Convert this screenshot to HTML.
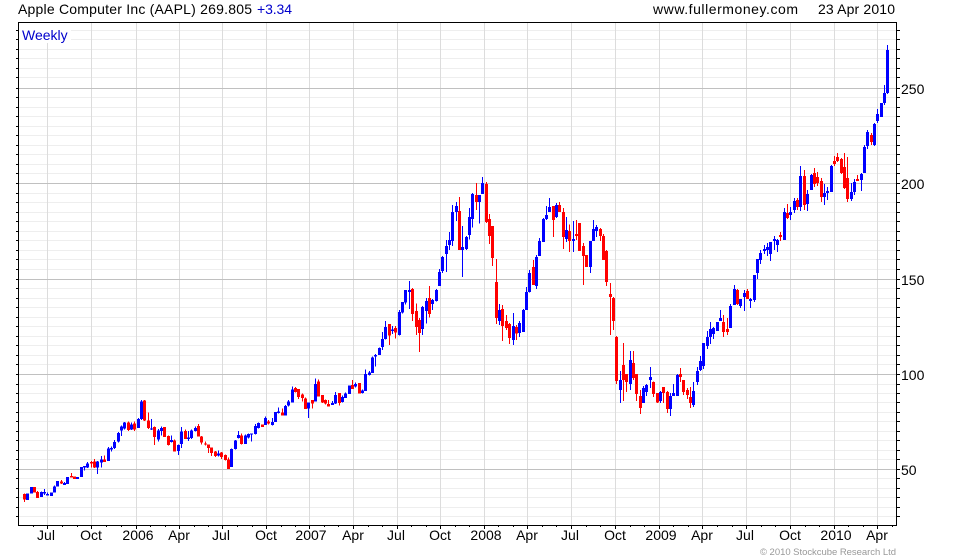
<!DOCTYPE html>
<html><head><meta charset="utf-8"><title>AAPL Weekly</title>
<style>
html,body{margin:0;padding:0;background:#fff;width:980px;height:560px;overflow:hidden}
svg{display:block}
text{font-family:"Liberation Sans",Arial,sans-serif;font-size:14px;fill:#000;shape-rendering:auto}
.b{fill:none;stroke:#0000ff}.r{fill:none;stroke:#ff0000}
.w{stroke-width:3}.o{stroke-width:9.4}
</style></head><body>
<svg width="980" height="560" viewBox="0 0 980 560" xmlns="http://www.w3.org/2000/svg" shape-rendering="crispEdges">
<rect width="980" height="560" fill="#fff"/>
<!-- minor horizontal grid -->
<path fill="none" stroke="#eeeeee" d="M19 30.5H896M19 39.5H896M19 49.5H896M19 58.5H896M19 68.5H896M19 77.5H896M19 97.5H896M19 107.5H896M19 116.5H896M19 126.5H896M19 135.5H896M19 145.5H896M19 154.5H896M19 164.5H896M19 173.5H896M19 193.5H896M19 202.5H896M19 212.5H896M19 221.5H896M19 231.5H896M19 240.5H896M19 250.5H896M19 259.5H896M19 269.5H896M19 288.5H896M19 298.5H896M19 307.5H896M19 317.5H896M19 326.5H896M19 336.5H896M19 345.5H896M19 355.5H896M19 364.5H896M19 384.5H896M19 393.5H896M19 402.5H896M19 412.5H896M19 421.5H896M19 431.5H896M19 440.5H896M19 450.5H896M19 459.5H896M19 478.5H896M19 488.5H896M19 497.5H896M19 507.5H896M19 516.5H896"/>
<!-- vertical grid -->
<path fill="none" stroke="#dcdcdc" d="M47.5 23V525M91.5 23V525M136.5 23V525M179.5 23V525M222.5 23V525M266.5 23V525M309.5 23V525M353.5 23V525M397.5 23V525M440.5 23V525M484.5 23V525M527.5 23V525M571.5 23V525M615.5 23V525M659.5 23V525M702.5 23V525M746.5 23V525M790.5 23V525M834.5 23V525M877.5 23V525"/>
<!-- major horizontal grid -->
<path fill="none" stroke="#c0c0c0" d="M19 88.5H896M19 183.5H896M19 279.5H896M19 374.5H896M19 469.5H896"/>
<rect x="19" y="23" width="52" height="20" fill="#fff"/>
<!-- ticks -->
<path fill="none" stroke="#000" d="M16 30.5H18M16 39.5H18M16 49.5H18M16 58.5H18M16 68.5H18M16 77.5H18M16 88.5H18M16 97.5H18M16 107.5H18M16 116.5H18M16 126.5H18M16 135.5H18M16 145.5H18M16 154.5H18M16 164.5H18M16 173.5H18M16 183.5H18M16 193.5H18M16 202.5H18M16 212.5H18M16 221.5H18M16 231.5H18M16 240.5H18M16 250.5H18M16 259.5H18M16 269.5H18M16 279.5H18M16 288.5H18M16 298.5H18M16 307.5H18M16 317.5H18M16 326.5H18M16 336.5H18M16 345.5H18M16 355.5H18M16 364.5H18M16 374.5H18M16 384.5H18M16 393.5H18M16 402.5H18M16 412.5H18M16 421.5H18M16 431.5H18M16 440.5H18M16 450.5H18M16 459.5H18M16 469.5H18M16 478.5H18M16 488.5H18M16 497.5H18M16 507.5H18M16 516.5H18"/>
<path fill="none" stroke="#000" d="M897 30.5H900M897 39.5H900M897 49.5H900M897 58.5H900M897 68.5H900M897 77.5H900M897 88.5H900M897 97.5H900M897 107.5H900M897 116.5H900M897 126.5H900M897 135.5H900M897 145.5H900M897 154.5H900M897 164.5H900M897 173.5H900M897 183.5H900M897 193.5H900M897 202.5H900M897 212.5H900M897 221.5H900M897 231.5H900M897 240.5H900M897 250.5H900M897 259.5H900M897 269.5H900M897 279.5H900M897 288.5H900M897 298.5H900M897 307.5H900M897 317.5H900M897 326.5H900M897 336.5H900M897 345.5H900M897 355.5H900M897 364.5H900M897 374.5H900M897 384.5H900M897 393.5H900M897 402.5H900M897 412.5H900M897 421.5H900M897 431.5H900M897 440.5H900M897 450.5H900M897 459.5H900M897 469.5H900M897 478.5H900M897 488.5H900M897 497.5H900M897 507.5H900M897 516.5H900"/>
<path fill="none" stroke="#000" d="M33.5 526V527M47.5 526V529M62.5 526V527M77.5 526V527M91.5 526V529M106.5 526V527M121.5 526V527M136.5 526V529M150.5 526V527M165.5 526V527M179.5 526V529M194.5 526V527M208.5 526V527M222.5 526V529M237.5 526V527M252.5 526V527M266.5 526V529M281.5 526V527M295.5 526V527M309.5 526V529M324.5 526V527M338.5 526V527M353.5 526V529M368.5 526V527M382.5 526V527M397.5 526V529M411.5 526V527M426.5 526V527M440.5 526V529M455.5 526V527M469.5 526V527M484.5 526V529M498.5 526V527M513.5 526V527M527.5 526V529M542.5 526V527M556.5 526V527M571.5 526V529M586.5 526V527M600.5 526V527M615.5 526V529M630.5 526V527M644.5 526V527M659.5 526V529M673.5 526V527M688.5 526V527M702.5 526V529M717.5 526V527M732.5 526V527M746.5 526V529M761.5 526V527M775.5 526V527M790.5 526V529M805.5 526V527M819.5 526V527M834.5 526V529M848.5 526V527M863.5 526V527M877.5 526V529M892.5 526V527"/>
<!-- frame -->
<path fill="none" stroke="#000" d="M18.5 22.5H896.5V525.5H18.5Z"/>

<!-- candles A -->
<g transform="translate(.17,380) scale(.33333)">
<path class="b w" d="M82 340V360M94 321V341M124 335V351M133 327V345M142 338V347M154 337V348M163 316V338M172 303V320M193 306V315M202 291V312M232 291V297M244 261V291M253 258V272M262 246V264M292 243V282M304 228V262M325 201V243M334 199V215M343 180V207M355 156V188M364 136V168M373 126V148M394 127V150M415 114V144M424 60V120M454 117V150M475 147V184M484 140V167M514 166V187M535 193V225M544 141V204M565 153V183M574 149V177M586 140V155M655 211V229M694 206V261M706 180V209M715 153V175M736 163V192M745 160V176M754 160V184M766 132V163M775 127V146M796 109V135M817 114V137M826 96V126M835 83V100M856 75V106M865 60V79"/>
<path class="b o" d="M82 340V360M94 321V341M124 336V351M133 336V341M142 342V347M154 337V348M163 320V338M172 303V320M193 309V315M202 291V312M232 291V297M244 261V291M253 258V263M262 250V263M292 245V263M304 238V248M325 205V243M334 204V209M343 186V204M355 159V185M364 139V152M373 128V146M394 134V148M415 117V144M424 64V117M454 145V149M475 151V178M484 144V153M514 180V186M535 195V213M544 155V192M565 172V177M574 152V174M586 144V153M655 220V226M694 207V261M706 181V207M715 165V174M736 166V192M745 162V172M754 160V164M766 138V162M775 129V144M796 114V135M817 126V135M826 96V126M835 95V99M856 78V106M865 64V77"/>
<path class="r w" d="M73 340V366M103 321V338M112 333V354M184 300V312M214 279V293M223 290V297M274 243V262M283 237V264M313 226V246M385 124V153M403 124V153M433 60V123M445 98V147M463 140V195M493 141V171M505 167V197M523 178V215M556 148V177M595 132V170M604 168V193M616 184V196M625 193V219M634 202V228M646 213V231M664 216V237M676 223V241M685 233V267M724 160V194M787 133V141M805 120V134M847 86V107"/>
<path class="r o" d="M73 342V359M103 321V338M112 336V354M184 304V311M214 288V293M223 290V297M274 246V251M283 244V263M313 238V246M385 127V150M403 131V148M433 62V122M445 121V144M463 141V171M493 141V171M505 168V195M523 181V214M556 153V177M595 138V170M604 169V188M616 190V194M625 193V204M634 203V219M646 214V228M664 217V231M676 225V240M685 238V267M724 166V192M787 133V141M805 125V131M847 97V107"/>
</g>
<!-- candles B -->
<g transform="translate(290.17,330) scale(.33333)">
<path class="b w" d="M7 170V218M55 218V264M76 145V215"/>
<path class="b o" d="M7 178V218M55 218V236M76 162V215"/>
<path class="r w" d="M16 171V187M25 177V207M37 190V215M46 203V237M67 210V236M85 148V200M97 195V219M106 208V224M115 210V230"/>
<path class="r o" d="M16 174V186M25 177V201M37 194V204M46 205V237M67 210V221M85 155V200M97 195V218M106 210V220M115 222V230"/>
</g>
<!-- candles C -->
<g transform="translate(330.17,290) scale(.33333)">
<path class="b w" d="M7 333V345M16 306V342M37 317V337M46 307V324M58 287V312M76 278V292M97 298V311M106 238V303M118 243V257M127 200V249M136 192V230M148 173V195M157 126V180"/>
<path class="b o" d="M7 339V345M16 315V341M37 321V336M46 311V324M58 287V312M76 282V289M97 302V309M106 252V303M118 247V255M127 202V249M136 195V200M148 174V195M157 147V171"/>
<path class="r w" d="M28 309V347M67 270V297M88 279V311"/>
<path class="r o" d="M28 309V339M67 285V297M88 279V311"/>
</g>
<!-- candles D -->
<g transform="translate(330.17,170) scale(.33333)">
<path class="b w" d="M166 453V508M187 468V492M208 420V497M217 396V430M226 360V403M238 333V417M277 408V495M289 384V460M307 387V420M319 357V394M328 297V348M337 258V309M349 210V306M358 186V240M367 105V228M379 96V153M397 168V321M409 198V240M418 114V209M427 69V172M448 75V160M457 21V72M508 402V465M550 429V525M568 453V501M580 417V486M589 351V420M598 300V368M619 255V357M628 204V258M640 144V216M649 108V150M658 84V126M679 99V144M709 141V216M730 153V246M781 213V309M790 150V213M799 165V201"/>
<path class="b o" d="M166 471V507M187 478V483M208 426V495M217 396V428M226 360V397M238 360V366M277 411V477M289 393V423M307 390V402M319 360V393M328 306V348M337 261V303M349 228V252M358 210V225M367 126V213M379 108V126M397 231V240M409 201V237M418 141V195M427 72V147M448 75V96M457 39V72M508 420V453M550 468V510M568 459V489M580 420V486M589 366V420M598 309V366M619 261V348M628 213V258M640 147V216M649 135V147M658 111V126M679 105V141M709 180V207M730 207V213M781 213V291M790 177V213M799 171V183"/>
<path class="r w" d="M178 462V525M196 468V505M247 354V453M259 400V495M268 444V546M298 348V442M388 81V240M439 39V120M469 36V159M478 132V222M487 168V288M499 267V462M517 405V513M529 435V480M538 459V522M559 465V510M610 270V345M670 108V201M688 96V126M700 114V237M718 163V246M739 150V210M748 159V243M760 219V345M769 255V291M811 174V213M820 192V270M829 240V348M841 339V495M850 381V480"/>
<path class="r o" d="M178 462V497M196 474V488M247 357V432M259 423V471M268 450V489M298 384V432M388 123V240M439 75V96M469 42V156M478 147V198M487 168V264M499 336V444M517 417V468M529 453V474M538 462V504M559 471V490M610 291V345M670 108V150M688 105V126M700 126V201M718 183V213M739 192V198M748 159V243M760 228V258M769 255V291M811 177V198M820 198V270M829 243V336M841 372V381M850 384V453"/>
</g>
<!-- candles E -->
<g transform="translate(610.17,290) scale(.33333)">
<path class="b w" d="M31 243V339M61 183V300M100 288V338M109 282V318M121 231V294M151 303V339M181 309V378M190 282V318M202 252V318M250 276V351M262 231V285M271 198V243M280 159V237M292 123V177M301 96V162M310 111V147M322 96V123M331 60V93M361 42V114"/>
<path class="b o" d="M31 270V300M61 210V282M100 294V339M109 285V306M121 261V270M151 306V333M181 318V357M190 309V318M202 255V318M250 303V345M262 243V276M271 213V240M280 159V228M292 141V168M301 117V141M310 114V132M322 96V123M331 84V93M361 48V114"/>
<path class="r w" d="M19 138V282M40 159V333M49 252V306M70 183V270M79 252V333M91 300V372M130 274V321M142 309V339M160 291V339M172 303V369M211 234V276M220 270V315M232 294V327M241 291V354M340 75V141M352 84V135"/>
<path class="r o" d="M19 141V273M40 225V270M49 252V276M70 219V264M79 252V312M91 318V354M130 276V312M142 309V337M160 291V309M172 306V357M211 252V261M220 270V306M232 300V315M241 321V339M340 96V126M352 117V126"/>
</g>
<!-- candles F -->
<g transform="translate(700.17,140) scale(.33333)">
<path class="b w" d="M103 435V495M121 477V504M133 450V513M151 474V504M163 405V486M172 357V417M181 330V372M193 315V342M202 309V348M211 306V363M223 288V330M232 297V336M253 204V300M271 201V240M283 174V219M301 78V213M322 150V213M334 102V150M373 132V195M382 141V180M394 75V156M454 129V183M463 117V165M484 99V153"/>
<path class="b o" d="M103 447V495M121 477V498M133 459V471M151 477V483M163 405V480M172 357V399M181 339V360M193 327V333M202 321V330M211 306V342M223 297V303M232 300V315M253 216V300M271 216V225M283 183V210M301 108V201M322 162V192M334 105V150M373 159V171M382 153V159M394 78V156M454 156V177M463 126V156M484 102V120"/>
<path class="r w" d="M112 447V495M142 447V477M241 276V303M262 192V237M292 174V210M313 90V210M343 84V141M352 96V138M364 114V186M403 48V78M412 39V66M424 54V102M433 39V147M442 51V186M472 105V123"/>
<path class="r o" d="M112 450V492M142 453V477M241 285V291M262 219V234M292 180V201M313 108V195M343 99V132M352 111V129M364 123V171M403 63V72M412 51V63M424 57V99M433 81V144M442 114V177M472 117V123"/>
</g>
<!-- candles G -->
<g transform="translate(800.17,40) scale(.33333)">
<path class="b w" d="M193 315V399M202 270V327M223 249V318M232 207V249M244 189V231M253 135V195M262 15V162"/>
<path class="b o" d="M193 321V399M202 276V318M223 252V315M232 222V243M244 189V231M253 159V189M262 30V159"/>
<path class="r w" d="M214 279V315"/>
<path class="r o" d="M214 285V306"/>
</g>

<!-- header -->
<text x="18" y="14" textLength="234" lengthAdjust="spacing">Apple Computer Inc (AAPL) 269.805</text>
<text x="257" y="14" textLength="35" lengthAdjust="spacing" style="fill:#0000cc">+3.34</text>
<text x="653" y="14" textLength="145" lengthAdjust="spacing">www.fullermoney.com</text>
<text x="818" y="14" textLength="77" lengthAdjust="spacing">23 Apr 2010</text>
<text x="22" y="40" style="fill:#0000cc">Weekly</text>
<!-- right axis -->
<text x="901" y="94">250</text>
<text x="901" y="189">200</text>
<text x="901" y="285">150</text>
<text x="901" y="380">100</text>
<text x="901" y="475">50</text>
<!-- bottom axis -->
<g text-anchor="middle">
<text x="46" y="540">Jul</text><text x="91" y="540">Oct</text><text x="138" y="540">2006</text><text x="179" y="540">Apr</text><text x="221" y="540">Jul</text><text x="266" y="540">Oct</text><text x="311" y="540">2007</text><text x="353" y="540">Apr</text><text x="396" y="540">Jul</text><text x="440" y="540">Oct</text><text x="486" y="540">2008</text><text x="527" y="540">Apr</text><text x="570" y="540">Jul</text><text x="615" y="540">Oct</text><text x="661" y="540">2009</text><text x="702" y="540">Apr</text><text x="745" y="540">Jul</text><text x="790" y="540">Oct</text><text x="836" y="540">2010</text><text x="877" y="540">Apr</text>
</g>
<text x="760" y="555" textLength="136" lengthAdjust="spacing" style="font-size:9.5px;fill:#999999">© 2010 Stockcube Research Ltd</text>
</svg>
</body></html>
